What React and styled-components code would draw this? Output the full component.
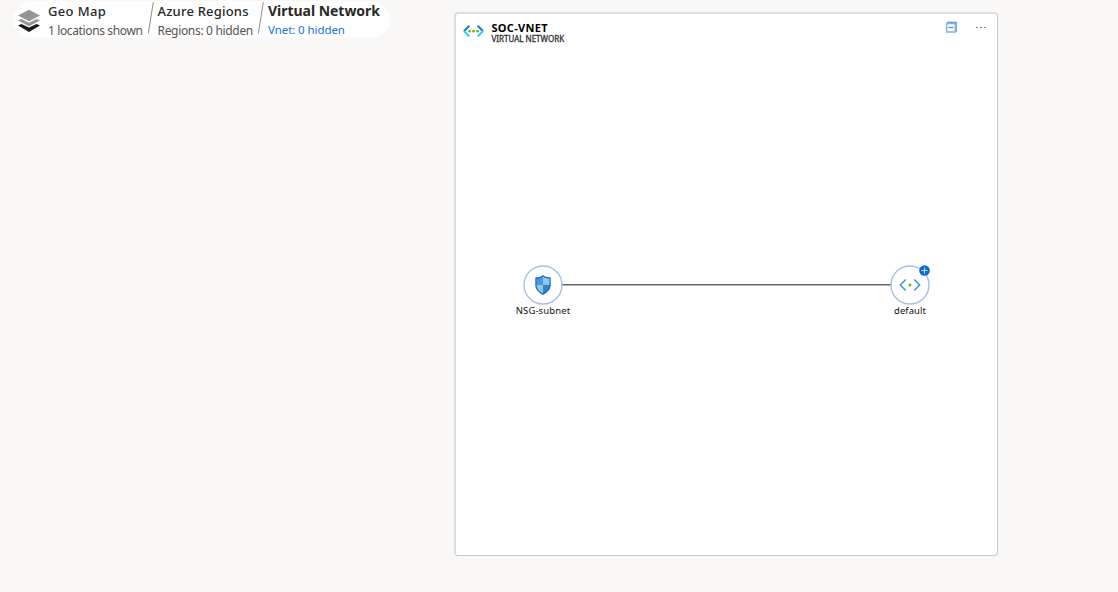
import React from "react";
import styled, { createGlobalStyle } from "styled-components";

const GlobalStyle = createGlobalStyle`
  * { box-sizing: border-box; }
  body {
    margin: 0;
    background: #f9f8f7;
    font-family: "Noto Sans", "Open Sans", sans-serif;
    color: #292827;
  }
`;

const Page = styled.div`
  display: flex;
  align-items: flex-start;
  width: 1118px;
  height: 592px;
  overflow: hidden;
`;

const Rail = styled.div`
  width: 454px;
  flex: none;
  padding: 1px 0 0 13px;
`;

const LevelBar = styled.nav`
  display: flex;
  width: 377px;
  height: 37px;
  padding-left: 4px;
  background: #fefefe;
  border-radius: 19px;
`;

const LayersIcon = styled.svg`
  flex: none;
  width: 24px;
  height: 24px;
  margin-top: 8px;
`;

const Level = styled.div`
  flex: none;
  width: ${(p) => p.$width}px;
  padding-left: ${(p) => p.$indent}px;
  white-space: nowrap;
`;

const LevelName = styled.div`
  height: 20px;
  font-size: ${(p) => (p.$active ? 14 : 13)}px;
  font-weight: ${(p) => (p.$active ? 700 : 500)};
  line-height: 20px;
  letter-spacing: ${(p) => p.$spacing}px;
`;

const LevelNote = styled.div`
  height: 17px;
  font-size: ${(p) => (p.$active ? 11.5 : 12)}px;
  line-height: ${(p) => (p.$active ? 18 : 20)}px;
  letter-spacing: ${(p) => p.$spacing}px;
  color: ${(p) => (p.$active ? "#1574d4" : "#555453")};
`;

const Slash = styled.svg`
  flex: none;
  width: 7px;
  height: 34px;
`;

const Card = styled.main`
  position: relative;
  width: 544px;
  height: 544px;
  margin-top: 12px;
  background: #fff;
  border: 1px solid #c9c8c8;
  border-width: 2px 1px 1px 2px;
  border-top-color: #dedddd;
  border-left-color: #dedddd;
  border-radius: 4px;
`;

const CardHeader = styled.header`
  display: flex;
  align-items: flex-start;
  padding: 8px 10px 0 7px;
`;

const VnetIcon = styled.svg`
  width: 21px;
  height: 14px;
  margin-top: 2px;
`;

const CardHeading = styled.div`
  flex: 1;
  padding-left: 7.5px;
  white-space: nowrap;
`;

const CardTitle = styled.div`
  height: 12px;
  font-size: 11px;
  font-weight: 700;
  line-height: 12px;
  letter-spacing: 0.3px;
  color: #000;
`;

const CardType = styled.div`
  font-size: 8px;
  line-height: 10px;
  letter-spacing: 0;
  color: #333;
  -webkit-text-stroke: 0.3px #333;
`;

const IconButton = styled.button`
  display: flex;
  padding: 0;
  margin: ${(p) => p.$margin};
  background: none;
  border: 0;
`;

const Link = styled.svg`
  position: absolute;
  left: 106px;
  top: 269px;
  width: 330px;
  height: 3px;
`;

const Node = styled.div`
  position: absolute;
  left: ${(p) => p.$x}px;
  top: 250.5px;
  width: 80px;
  display: flex;
  flex-direction: column;
  align-items: center;
`;

const NodeCircle = styled.div`
  position: relative;
  display: flex;
  align-items: center;
  justify-content: center;
  width: 40px;
  height: 40px;
`;

const Ring = styled.svg`
  position: absolute;
  inset: 0;
  width: 40px;
  height: 40px;
`;

const NodeGlyph = styled.svg`
  position: relative;
`;

const NodeLabel = styled.div`
  margin-top: 0.5px;
  font-size: 9.5px;
  line-height: 12px;
  letter-spacing: ${(p) => p.$spacing}px;
  color: #111;
`;

const Badge = styled.svg`
  position: absolute;
  right: 0;
  top: 0.5px;
  width: 11px;
  height: 11px;
`;

const Divider = () => (
  <Slash viewBox="0 0 7 34">
    <path d="M6.3 1.2 1.3 32.5" stroke="#8f8e8d" strokeWidth="1" fill="none" />
  </Slash>
);

const NodeRing = () => (
  <Ring viewBox="0 0 40 40">
    <circle cx="20" cy="20" r="19" fill="#fff" stroke="#a9c0e0" strokeWidth="1.4" />
  </Ring>
);

export default function App() {
  return (
    <>
      <GlobalStyle />
      <Page>
        <Rail>
          <LevelBar>
            <LayersIcon viewBox="0 0 24 24">
              <path d="M1 16.6 4.4 15 12 18.6 19.6 15 23 16.6 12 23z" fill="#1c1b1a" />
              <path d="M1 11.5 4.4 10 12 13.8 19.6 10 23 11.5 12 17.3z" fill="#979593" />
              <path d="M12 .8 23 6.4 12 12.2 1 6.4z" fill="#979593" />
            </LayersIcon>
            <Level $width={105.5} $indent={7}>
              <LevelName $spacing={0.35}>Geo Map</LevelName>
              <LevelNote $spacing={-0.37}>1 locations shown</LevelNote>
            </Level>
            <Divider />
            <Level $width={103} $indent={4}>
              <LevelName $spacing={0.2}>Azure Regions</LevelName>
              <LevelNote $spacing={-0.32}>Regions: 0 hidden</LevelNote>
            </Level>
            <Divider />
            <Level $width={118} $indent={4.5}>
              <LevelName $active $spacing={-0.03}>Virtual Network</LevelName>
              <LevelNote $active $spacing={-0.08}>Vnet: 0 hidden</LevelNote>
            </Level>
          </LevelBar>
        </Rail>
        <Card>
          <CardHeader>
            <VnetIcon viewBox="0 0 21 14">
              <g fill="none" strokeWidth="2.1">
                <path d="M6.3 1.7 1 7.3M14.7 1.7 20 7.3" stroke="#1b7fd6" />
                <path d="M1 7.1 6.3 12.6M20 7.1 14.7 12.6" stroke="#32d0ef" />
              </g>
              <g fill="#75b41c">
                <circle cx="6.5" cy="7.2" r="1.4" />
                <circle cx="10.5" cy="7.2" r="1.4" />
                <circle cx="14.5" cy="7.2" r="1.4" />
              </g>
            </VnetIcon>
            <CardHeading>
              <CardTitle>SOC-VNET</CardTitle>
              <CardType>VIRTUAL NETWORK</CardType>
            </CardHeading>
            <IconButton $margin="-1px 17px 0 0" aria-label="Collapse">
              <svg width="13" height="12" viewBox="0 0 13 12">
                <path d="M2 1.5H11V11" fill="none" stroke="#4793da" strokeWidth="1.6" />
                <rect x="1.7" y="2.5" width="8.6" height="8.5" fill="#fff" stroke="#86b8e8" strokeWidth="1.6" />
                <path d="M3.500 6.500h5" stroke="#4793da" strokeWidth="1.300" />
              </svg>
            </IconButton>
            <IconButton $margin="4px 0.5px 0 0" aria-label="More">
              <svg width="12" height="3" viewBox="0 0 12 3" fill="#555">
                <rect x="1" y="1" width="1.5" height="1" />
                <rect x="5.2" y="1" width="1.5" height="1" />
                <rect x="9.4" y="1" width="1.5" height="1" />
              </svg>
            </IconButton>
          </CardHeader>
          <Link viewBox="0 0 330 3">
            <path d="M0 1.7h330" stroke="#666" strokeWidth="1.4" />
          </Link>
          <Node $x={47}>
            <NodeCircle>
              <NodeRing />
              <NodeGlyph width="16" height="20" viewBox="0 0 16 20">
                <path d="M8 0C5.7 1.8 3.3 2.4.3 2.5v7.3C.3 14.6 3.6 17.3 8 20c4.4-2.7 7.7-5.4 7.7-10.2V2.5C12.7 2.4 10.3 1.8 8 0z" fill="#1268b8" />
                <path d="M8 1.5C6.2 2.9 4 3.5 1.5 3.7V10H8z" fill="#4a9bdd" />
                <path d="M8 1.5c1.8 1.4 4 2 6.5 2.2V10H8z" fill="#93c4ec" />
                <path d="M1.5 10H8v8.6C4.2 16.2 1.5 14 1.5 10z" fill="#93c4ec" />
                <path d="M14.5 10H8v8.6c3.8-2.4 6.5-4.6 6.5-8.6z" fill="#2e84d0" />
              </NodeGlyph>
            </NodeCircle>
            <NodeLabel $spacing={0.12}>NSG-subnet</NodeLabel>
          </Node>
          <Node $x={414}>
            <NodeCircle>
              <NodeRing />
              <NodeGlyph width="22" height="14" viewBox="0 0 22 14">
                <path d="M6.7 1.5 1.3 7l5.4 5.5M15.3 1.5 20.7 7l-5.4 5.5" fill="none" stroke="#3a93d0" strokeWidth="1.4" />
                <circle cx="11" cy="7" r="1.5" fill="#75b41c" />
              </NodeGlyph>
              <Badge viewBox="0 0 11 11">
                <circle cx="5.5" cy="5.5" r="5.3" fill="#0f6cd0" />
                <path d="M5.5 2.5v6M2.5 5.5h6" stroke="#b9dcfa" strokeWidth="1.1" />
              </Badge>
            </NodeCircle>
            <NodeLabel $spacing={0.03}>default</NodeLabel>
          </Node>
        </Card>
      </Page>
    </>
  );
}
